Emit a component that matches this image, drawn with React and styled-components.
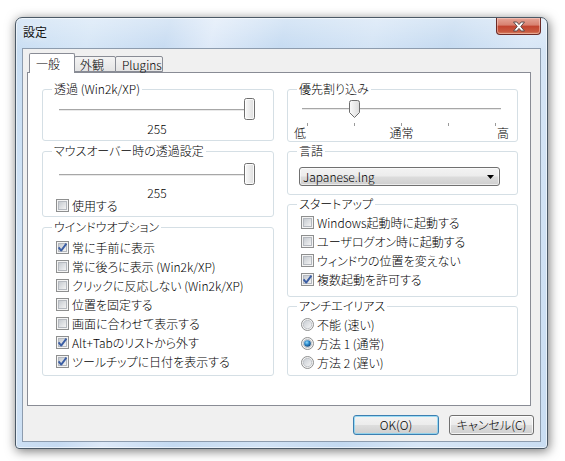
import React from 'react';
import styled, { createGlobalStyle } from 'styled-components';

const GlobalStyle = createGlobalStyle`
  html, body { margin: 0; padding: 0; background: #ffffff; }
  body {
    font-family: "Noto Sans CJK JP", "Noto Sans", sans-serif;
    font-size: 12px;
    font-weight: 300;
    font-feature-settings: "palt" 1;
    color: #000;
  }
  * { box-sizing: border-box; }
`;

const UI_FONT = `"Noto Sans CJK JP", "Noto Sans", sans-serif`;

const Page = styled.div`
  width: 565px;
  height: 461px;
  padding: 17px 0 0 15px;
  overflow: hidden;
`;

const Window = styled.div`
  width: 533px;
  height: 432px;
  border: 1px solid #4b5966;
  border-radius: 7px 7px 4px 4px;
  background:
    linear-gradient(to bottom, rgba(255,255,255,0.35), rgba(255,255,255,0) 34px),
    linear-gradient(105deg, #c6dcf2 0%, #d4e5f6 12%, #c5daf1 24%, #dde9f8 31%, #c4daf1 42%, #d2e3f5 56%, #c3d9f0 68%, #d7e6f6 80%, #c9ddf2 100%);
  box-shadow: 1px 2px 11px rgba(0, 0, 0, 0.55), inset 0 0 0 1px rgba(255, 255, 255, 0.55);
  display: flex;
  flex-direction: column;
`;

const TitleBar = styled.div`
  height: 30px;
  display: flex;
  justify-content: space-between;
  align-items: flex-start;
  padding: 0 6px 0 7px;
`;

const TitleText = styled.div`
  margin-top: 7px;
  font-size: 12px;
  line-height: 14px;
  font-weight: 400;
  color: #111;
  text-shadow: 0 0 6px rgba(255, 255, 255, 0.9);
`;

const CloseButton = styled.div`
  width: 45px;
  height: 17px;
  border: 1px solid #6b2a26;
  border-top: none;
  border-radius: 0 0 4px 4px;
  background: linear-gradient(to bottom, #e6a597 0%, #d7806f 45%, #c2432f 50%, #c95a40 85%, #d98a6a 100%);
  box-shadow: inset 0 0 0 1px rgba(255, 220, 210, 0.45);
  display: flex;
  align-items: center;
  justify-content: center;
`;

const Client = styled.div`
  margin: 0 6px;
  height: 394px;
  border: 1px solid #8d9cae;
  background: #f0f0f0;
  display: flex;
  flex-direction: column;
`;

const TabStrip = styled.div`
  display: flex;
  align-items: flex-end;
  margin: 3px 0 0 4px;
  padding-left: 2px;
  height: 20px;
  position: relative;
  z-index: 1;
`;

const Tab = styled.div`
  width: ${p => p.$w}px;
  height: ${p => (p.$active ? 20 : 16)}px;
  margin-left: ${p => (p.$first ? 0 : -1)}px;
  margin-bottom: ${p => (p.$active ? -1 : 0)}px;
  padding-left: ${p => p.$pl}px;
  border: 1px solid #898c95;
  border-bottom: ${p => (p.$active ? 'none' : '1px solid #898c95')};
  border-radius: 2px 2px 0 0;
  background: ${p => (p.$active ? '#ffffff' : 'linear-gradient(to bottom, #f4f4f4, #e4e4e4)')};
  font-size: 12px;
  line-height: 14px;
  padding-top: ${p => (p.$active ? 3 : 1)}px;
  white-space: nowrap;
  position: relative;
  z-index: ${p => (p.$active ? 2 : 1)};
`;

const Panel = styled.div`
  margin-left: 4px;
  width: 504px;
  height: 334px;
  border: 1px solid #898c95;
  background: #ffffff;
  padding: 9px 12px 0 14px;
  display: grid;
  grid-template-columns: 232px 231px;
  column-gap: 13px;
  align-items: start;
`;

const Column = styled.div`
  display: flex;
  flex-direction: column;
  gap: ${p => p.$gap}px;
`;

const Group = styled.fieldset`
  margin: 0;
  min-width: 0;
  height: ${p => p.$h}px;
  padding: ${p => p.$pt}px 0 0 9px;
  border: 1px solid #d5dfe5;
  border-radius: 3px;
`;

const Legend = styled.legend`
  padding: 0 2px;
  font-size: 12px;
  line-height: 14px;
  color: #000;
`;

const SliderBox = styled.div`
  position: relative;
  width: ${p => p.$w}px;
  height: 22px;
  margin-left: ${p => p.$ml}px;
  padding-top: ${p => p.$trackTop}px;
`;

const Track = styled.div`
  height: 2px;
  border-top: 1px solid #a7a7a7;
  background: #e9e9e9;
`;

const ThumbHolder = styled.div`
  position: absolute;
  top: ${p => p.$top}px;
  width: 11px;
  display: flex;
`;

const ValueText = styled.div`
  width: ${p => p.$w}px;
  margin: ${p => p.$mt}px 0 0 ${p => p.$ml}px;
  text-align: center;
  line-height: 12px;
  font-size: 12px;
`;

const TickRow = styled.div`
  width: ${p => p.$w}px;
  margin: 3px 0 0 ${p => p.$ml}px;
  height: 3px;
  padding: 0 5px;
  display: flex;
  justify-content: space-between;
`;

const Tick = styled.span`
  width: 1px;
  height: 3px;
  background: #9a9a9a;
`;

const ScaleLabels = styled.div`
  width: 215px;
  margin-left: -3px;
  display: flex;
  justify-content: space-between;
  line-height: 14px;
  font-size: 12px;
`;

const Row = styled.div`
  display: flex;
  align-items: center;
  gap: 3px;
  height: ${p => p.$h || 19}px;
  margin-left: 4px;
  white-space: nowrap;
  font-size: 12px;
  line-height: 14px;
`;

const Select = styled.div`
  width: 201px;
  height: 19px;
  margin-left: 2px;
  border: 1px solid #707070;
  border-radius: 3px;
  background: linear-gradient(to bottom, #f3f3f3 0%, #ececec 48%, #dcdcdc 52%, #cfcfcf 100%);
  box-shadow: inset 0 0 0 1px rgba(255, 255, 255, 0.6);
  display: flex;
  align-items: center;
  justify-content: space-between;
  padding: 0 5px 0 3px;
  font-size: 12px;
  line-height: 14px;
`;

const Footer = styled.div`
  display: flex;
  justify-content: flex-end;
  gap: 10px;
  margin-top: 9px;
  padding-right: 6px;
`;

const Button = styled.button`
  width: ${p => p.$w}px;
  height: 20px;
  padding: 0;
  font-family: ${UI_FONT};
  font-size: 12px;
  font-weight: 300;
  font-feature-settings: "palt" 1;
  line-height: 14px;
  color: #000;
  border: 1px solid ${p => (p.$default ? '#3c7fb1' : '#707070')};
  border-radius: 3px;
  background: linear-gradient(to bottom, #f3f3f3 0%, #ececec 48%, #dddddd 52%, #cfcfcf 100%);
  box-shadow: inset 0 0 0 1px ${p => (p.$default ? 'rgba(120, 210, 245, 0.7)' : 'rgba(255, 255, 255, 0.75)')};
`;

function CloseGlyph() {
  return (
    <svg width="14" height="11" viewBox="0 0 14 11">
      <path
        d="M1.5 1 H4.8 L7 3.6 L9.2 1 H12.5 L8.8 5.5 L12.5 10 H9.2 L7 7.4 L4.8 10 H1.5 L5.2 5.5 Z"
        fill="#ffffff"
        stroke="#5b4a4a"
        strokeWidth="1"
        strokeLinejoin="round"
      />
    </svg>
  );
}

function RectThumb() {
  return (
    <svg width="11" height="22" viewBox="0 0 11 22">
      <defs>
        <linearGradient id="rtg" x1="0" y1="0" x2="1" y2="0">
          <stop offset="0" stopColor="#fbfbfb" />
          <stop offset="1" stopColor="#dcdcdc" />
        </linearGradient>
      </defs>
      <rect x="0.5" y="0.5" width="10" height="21" rx="2" fill="url(#rtg)" stroke="#6e6e6e" />
      <rect x="1.5" y="1.5" width="8" height="19" rx="1" fill="none" stroke="#ffffff" strokeOpacity="0.8" />
    </svg>
  );
}

function PointerThumb() {
  return (
    <svg width="11" height="18" viewBox="0 0 11 18">
      <defs>
        <linearGradient id="ptg" x1="0" y1="0" x2="1" y2="0">
          <stop offset="0" stopColor="#fbfbfb" />
          <stop offset="1" stopColor="#dcdcdc" />
        </linearGradient>
      </defs>
      <path
        d="M0.5 2.5 Q0.5 0.5 2.5 0.5 H8.5 Q10.5 0.5 10.5 2.5 V12.5 L5.5 17.5 L0.5 12.5 Z"
        fill="url(#ptg)"
        stroke="#6e6e6e"
      />
    </svg>
  );
}

function CheckIcon({ checked }) {
  return (
    <svg width="13" height="13" viewBox="0 0 13 13" style={{ flex: 'none' }}>
      <defs>
        <linearGradient id="cbg" x1="0" y1="0" x2="1" y2="1">
          <stop offset="0" stopColor="#c3c8ce" />
          <stop offset="1" stopColor="#f6f6f6" />
        </linearGradient>
      </defs>
      <rect x="0.5" y="0.5" width="12" height="12" fill="#f4f4f4" stroke="#8e8f8f" />
      <rect x="2.5" y="2.5" width="8" height="8" fill="url(#cbg)" stroke="#b5b9bf" />
      {checked && (
        <path d="M2.6 6.4 L5.2 9.6 L10.4 2.6" fill="none" stroke="#3b5ea4" strokeWidth="1.9" strokeLinejoin="round" />
      )}
    </svg>
  );
}

function RadioIcon({ checked }) {
  return (
    <svg width="13" height="13" viewBox="0 0 13 13" style={{ flex: 'none' }}>
      <defs>
        <linearGradient id="rbg" x1="0" y1="0" x2="1" y2="1">
          <stop offset="0" stopColor="#c6cbd1" />
          <stop offset="1" stopColor="#f7f7f7" />
        </linearGradient>
        <radialGradient id="rdot" cx="0.4" cy="0.35" r="0.7">
          <stop offset="0" stopColor="#8fdcff" />
          <stop offset="0.5" stopColor="#2a86c9" />
          <stop offset="1" stopColor="#12406f" />
        </radialGradient>
      </defs>
      <circle cx="6.5" cy="6.5" r="6" fill="#f4f4f4" stroke="#8e8f8f" />
      <circle cx="6.5" cy="6.5" r="4.2" fill="url(#rbg)" stroke="#b7bbc0" strokeWidth="0.8" />
      {checked && <circle cx="6.5" cy="6.5" r="3.3" fill="url(#rdot)" />}
    </svg>
  );
}

function Slider({ width, ml, value, max, pointer, trackTop }) {
  const left = Math.round(((width - 11) * value) / max);
  return (
    <SliderBox $w={width} $ml={ml} $trackTop={trackTop}>
      <Track />
      <ThumbHolder $top={pointer ? 2 : 0} style={{ left }}>
        {pointer ? <PointerThumb /> : <RectThumb />}
      </ThumbHolder>
    </SliderBox>
  );
}

function Check({ label, checked, h }) {
  return (
    <Row $h={h}>
      <CheckIcon checked={checked} />
      <span>{label}</span>
    </Row>
  );
}

function Radio({ label, checked }) {
  return (
    <Row>
      <RadioIcon checked={checked} />
      <span>{label}</span>
    </Row>
  );
}

const windowOptions = [
  ['常に手前に表示', true],
  ['常に後ろに表示 (Win2k/XP)', false],
  ['クリックに反応しない (Win2k/XP)', false],
  ['位置を固定する', false],
  ['画面に合わせて表示する', false],
  ['Alt+Tabのリストから外す', true],
  ['ツールチップに日付を表示する', true],
];

const startupOptions = [
  ['Windows起動時に起動する', false],
  ['ユーザログオン時に起動する', false],
  ['ウィンドウの位置を変えない', false],
  ['複数起動を許可する', true],
];

export default function App() {
  return (
    <>
      <GlobalStyle />
      <Page>
        <Window>
          <TitleBar>
            <TitleText>設定</TitleText>
            <CloseButton>
              <CloseGlyph />
            </CloseButton>
          </TitleBar>
          <Client>
            <TabStrip>
              <Tab $active $first $w={46} $pl={6}>一般</Tab>
              <Tab $w={42} $pl={5}>外観</Tab>
              <Tab $w={48} $pl={6}>Plugins</Tab>
            </TabStrip>
            <Panel>
              <Column $gap={3}>
                <Group $h={59} $pt={2}>
                  <Legend>透過 (Win2k/XP)</Legend>
                  <Slider width={196} ml={7} value={255} max={255} trackTop={11} />
                  <ValueText $w={196} $ml={7} $mt={3}>255</ValueText>
                </Group>
                <Group $h={73} $pt={5}>
                  <Legend>マウスオーバー時の透過設定</Legend>
                  <Slider width={196} ml={7} value={255} max={255} trackTop={11} />
                  <ValueText $w={196} $ml={7} $mt={2}>255</ValueText>
                  <Check label="使用する" checked={false} h={13} />
                </Group>
                <Group $h={156} $pt={4}>
                  <Legend>ウインドウオプション</Legend>
                  {windowOptions.map(([l, c]) => (
                    <Check key={l} label={l} checked={c} />
                  ))}
                </Group>
              </Column>
              <Column $gap={2}>
                <Group $h={60} $pt={2}>
                  <Legend>優先割り込み</Legend>
                  <Slider width={199} ml={5} value={1} max={4} pointer trackTop={10} />
                  <TickRow $w={199} $ml={5}>
                    <Tick /><Tick /><Tick /><Tick /><Tick />
                  </TickRow>
                  <ScaleLabels>
                    <span>低</span>
                    <span>通常</span>
                    <span>高</span>
                  </ScaleLabels>
                </Group>
                <Group $h={51} $pt={9}>
                  <Legend>言語</Legend>
                  <Select>
                    <span>Japanese.lng</span>
                    <svg width="7" height="4" viewBox="0 0 7 4">
                      <path d="M0 0 H7 L3.5 4 Z" fill="#000" />
                    </svg>
                  </Select>
                </Group>
                <Group $h={100} $pt={2}>
                  <Legend>スタートアップ</Legend>
                  {startupOptions.map(([l, c]) => (
                    <Check key={l} label={l} checked={c} />
                  ))}
                </Group>
                <Group $h={77} $pt={2}>
                  <Legend>アンチエイリアス</Legend>
                  <Radio label="不能 (速い)" checked={false} />
                  <Radio label="方法 1 (通常)" checked />
                  <Radio label="方法 2 (遅い)" checked={false} />
                </Group>
              </Column>
            </Panel>
            <Footer>
              <Button $default $w={86}>OK(O)</Button>
              <Button $w={85}>キャンセル(C)</Button>
            </Footer>
          </Client>
        </Window>
      </Page>
    </>
  );
}
